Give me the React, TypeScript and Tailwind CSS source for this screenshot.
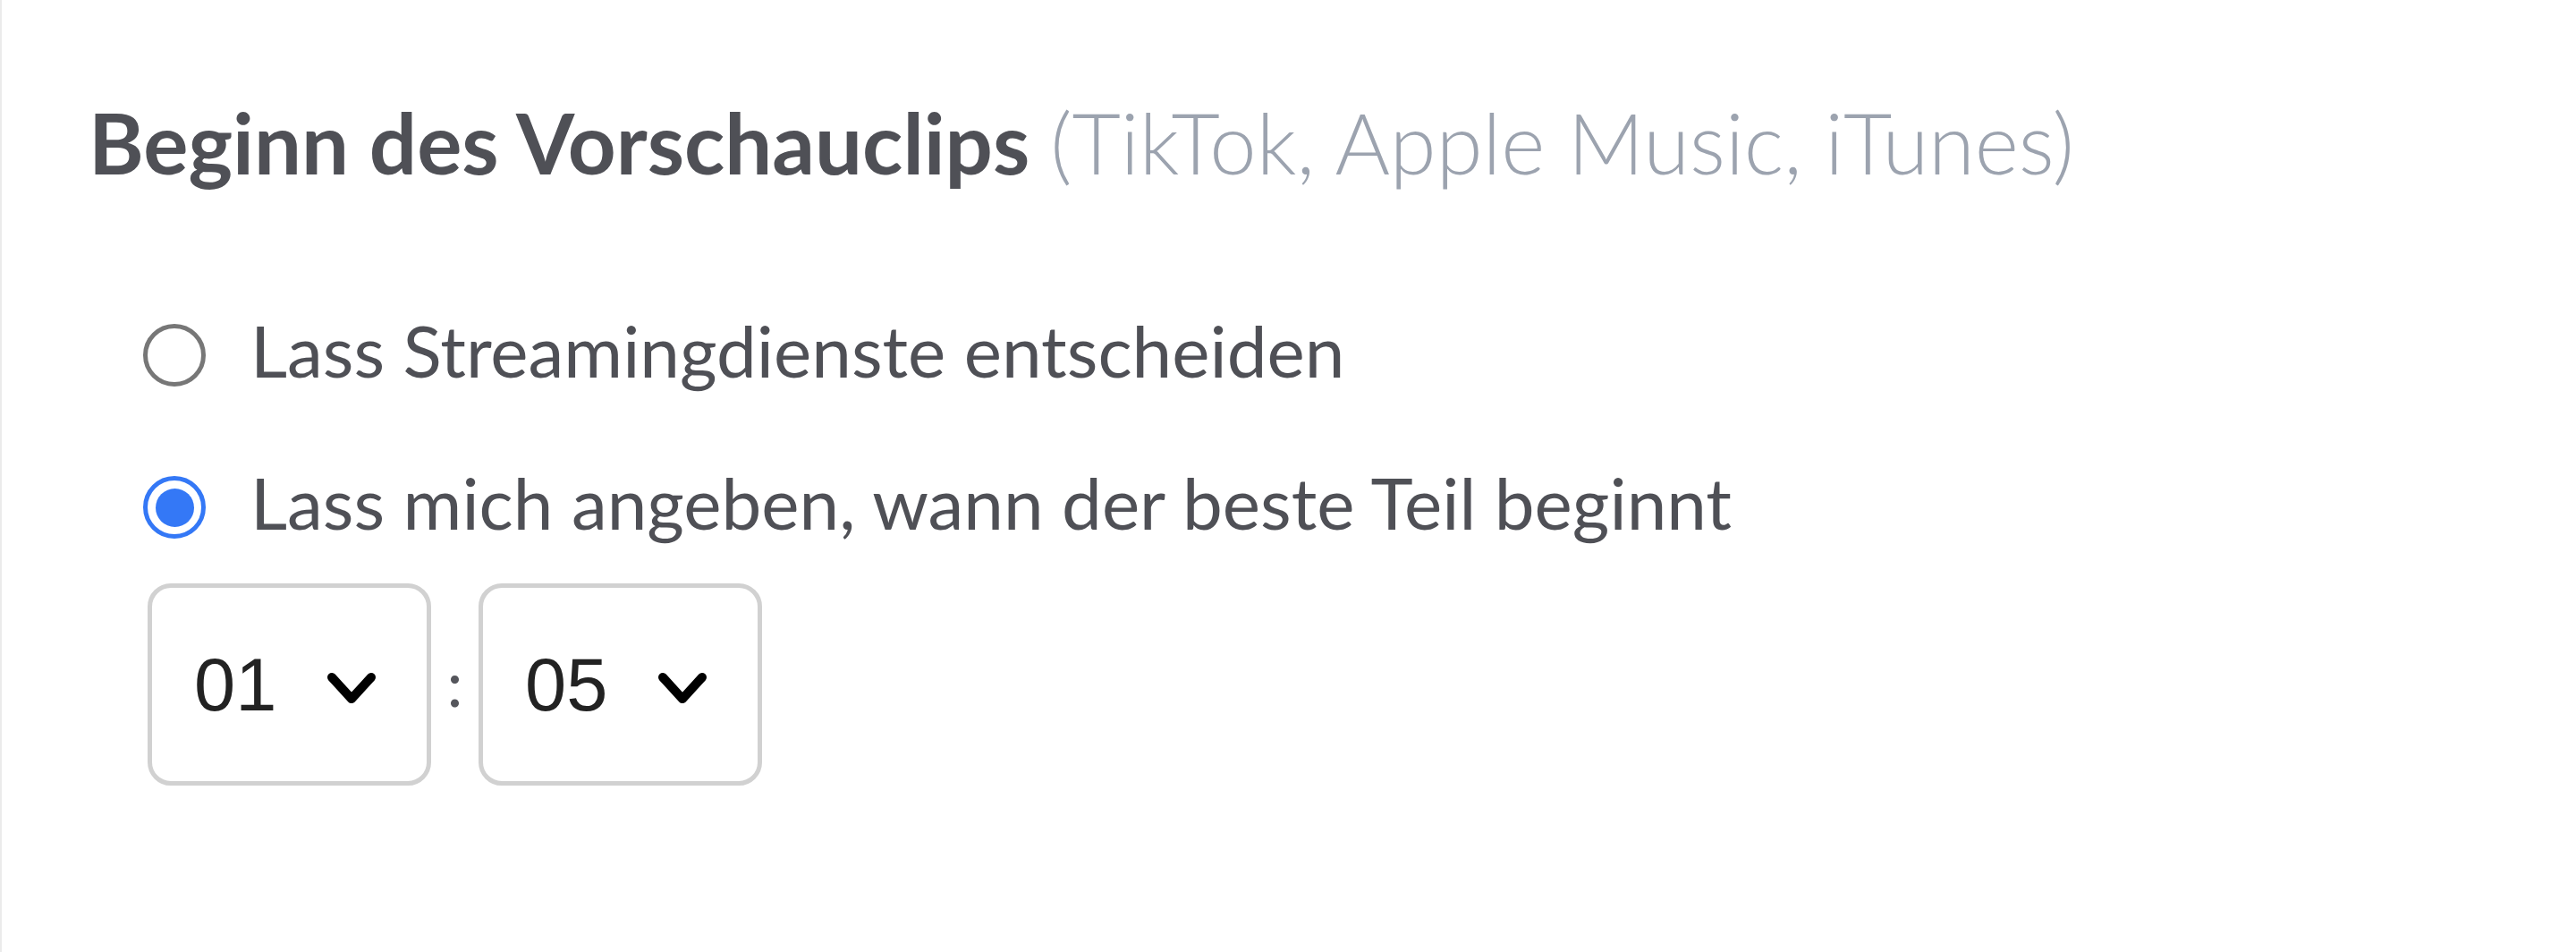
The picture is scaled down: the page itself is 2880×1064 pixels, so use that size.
import React from "react";

function Radio({ checked }: { checked: boolean }) {
  return checked ? (
    <div className="w-[70px] h-[70px] rounded-full border-[5px] border-[#3478f6] flex items-center justify-center shrink-0 mt-[12px]">
      <div className="w-[43px] h-[43px] rounded-full bg-[#3478f6]" />
    </div>
  ) : (
    <div className="w-[70px] h-[70px] rounded-full border-[5px] border-[#777777] shrink-0 mt-[12px]" />
  );
}

function Chevron() {
  return (
    <svg width="56" height="36" viewBox="0 0 56 36" className="shrink-0">
      <polyline
        points="6,6 28,30 50,6"
        fill="none"
        stroke="#000"
        strokeWidth="10"
        strokeLinecap="round"
        strokeLinejoin="round"
      />
    </svg>
  );
}

function Select({ value }: { value: string }) {
  return (
    <div className="w-[317px] h-[226px] rounded-[26px] border-[5px] border-[#d1d1d1] bg-white flex items-center pl-[47px]">
      <span
        className="text-[83px] leading-none text-[#222222] w-[93px]"
        style={{ fontFamily: '"Liberation Sans", Arial, sans-serif' }}
      >
        {value}
      </span>
      <div className="ml-[55px] mt-[8px]">
        <Chevron />
      </div>
    </div>
  );
}

export default function App() {
  return (
    <div
      className="min-h-screen bg-white border-l-2 border-[#ebebeb]"
      style={{ fontFamily: 'Lato, "Open Sans", sans-serif' }}
    >
      <div className="pt-[102px]">
        <h1 className="pl-[97px] text-[94px] leading-[113px] font-bold text-[#4f5056] whitespace-nowrap">
          Beginn des Vorschauclips{" "}
          <span className="font-light text-[#9ca3af]">(TikTok, Apple Music, iTunes)</span>
        </h1>
        <div className="pl-[158px] mt-[128px] flex flex-col gap-[74px]">
          <div className="flex items-center gap-[50px]">
            <Radio checked={false} />
            <span className="text-[80px] leading-[96px] text-[#4f5056] whitespace-nowrap">
              Lass Streamingdienste entscheiden
            </span>
          </div>
          <div className="flex items-center gap-[50px]">
            <Radio checked={true} />
            <span className="text-[80px] leading-[96px] text-[#4f5056] whitespace-nowrap">
              Lass mich angeben, wann der beste Teil beginnt
            </span>
          </div>
        </div>
        <div className="pl-[163px] mt-[43px] flex items-center">
          <Select value="01" />
          <span className="w-[53px] text-center text-[72px] leading-none text-[#55565c] mt-[-6px]">:</span>
          <Select value="05" />
        </div>
      </div>
    </div>
  );
}
